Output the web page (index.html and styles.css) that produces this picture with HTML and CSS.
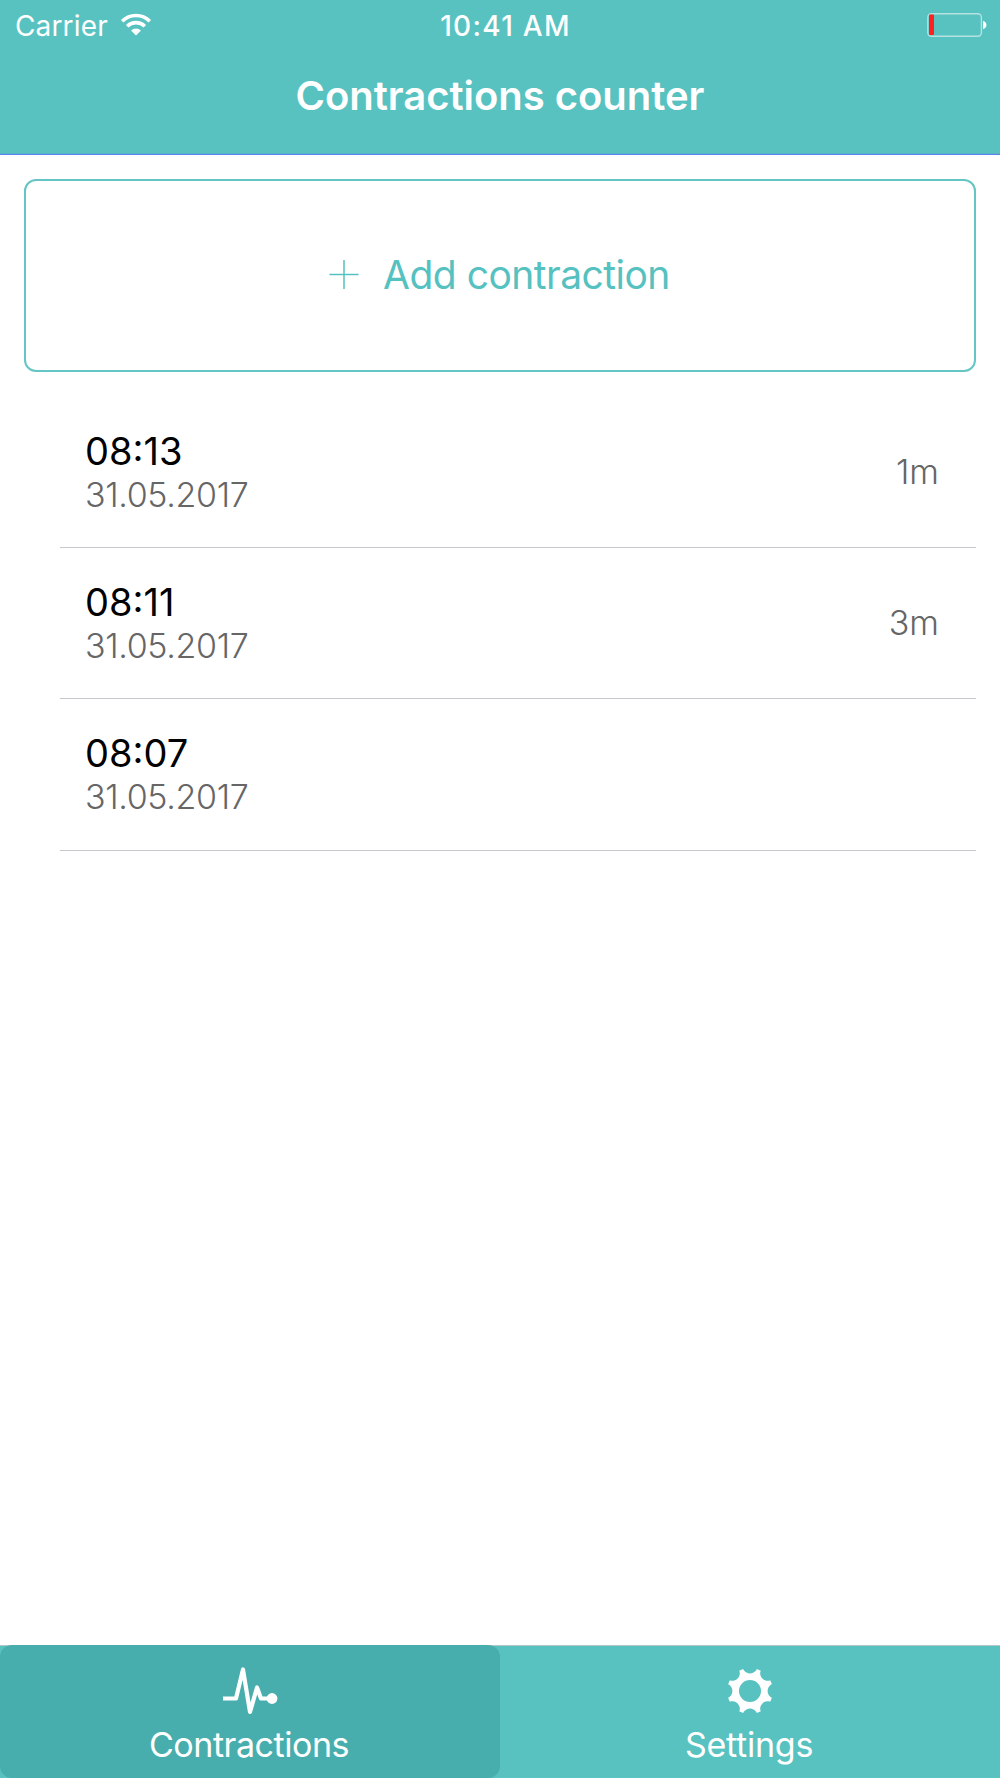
FILE: index.html
```html
<!DOCTYPE html>
<html lang="en">
<head>
<meta charset="utf-8">
<title>Contractions counter</title>
<link rel="stylesheet" href="styles.css">
</head>
<body>
<div class="app">
  <header class="header">
    <div class="status">
      <div class="status-left">
        <span class="carrier">Carrier</span>
        <svg class="wifi" viewBox="0 0 32 24" width="32" height="24">
          <path d="M2.2 8.2A19.5 19.5 0 0 1 29.8 8.2M7.2 13.2A12.6 12.6 0 0 1 24.8 13.2" fill="none" stroke="#fff" stroke-width="3.6"/>
          <path d="M16 22.5L11 17.4A7.2 7.2 0 0 1 21 17.4Z" fill="#fff"/>
        </svg>
      </div>
      <span class="clock">10:41 AM</span>
      <div class="status-right">
        <svg class="battery" viewBox="0 0 60 24" width="60" height="24">
          <rect x="0.8" y="0.8" width="53.6" height="22.4" rx="3.6" fill="none" stroke="#b4e2e1" stroke-width="1.4"/>
          <rect x="2" y="1.6" width="5" height="20.4" rx="1" fill="#ff2020"/>
          <path d="M56 8C60.600 8.600 60.600 15.400 56 16Z" fill="#fff"/>
        </svg>
      </div>
    </div>
    <h1 class="title">Contractions counter</h1>
  </header>
  <main class="content">
    <button class="add">
      <svg class="plus" viewBox="0 0 30 30" width="30" height="30"><path d="M0.500 14.500H29.500M15 0V29" stroke="#55c1c0" stroke-width="1.500"/></svg>
      <span class="add-label">Add contraction</span>
    </button>
    <ul class="list">
      <li class="row">
        <div class="when"><span class="time">08:13</span><span class="date">31.05.2017</span></div>
        <span class="gap">1m</span>
      </li>
      <li class="row">
        <div class="when"><span class="time">08:11</span><span class="date">31.05.2017</span></div>
        <span class="gap">3m</span>
      </li>
      <li class="row">
        <div class="when"><span class="time">08:07</span><span class="date">31.05.2017</span></div>
      </li>
    </ul>
  </main>
  <nav class="tabs">
    <a class="tab active">
      <svg class="tab-icon" viewBox="0 0 56 50" width="56" height="50">
        <path d="M1 32.500H14L21 3.500L28 46L35 21.500L39 32.500H48" fill="none" stroke="#fff" stroke-width="4.200" stroke-linejoin="round"/>
        <circle cx="50" cy="32.500" r="5.400" fill="#fff"/>
      </svg>
      <span class="tab-label contractions">Contractions</span>
    </a>
    <a class="tab">
      <svg class="tab-icon" viewBox="-28 -25 56 50" width="56" height="50">
        <path fill="#fff" fill-rule="evenodd" d="M-6.200-20.800A7.600 7.600 0 0 0 6.200-20.800L6.800-21.900L10.800-20.200L10.300-19.100A7.600 7.600 0 0 0 19.100-10.300L20.200-10.800L21.900-6.800L20.800-6.200A7.600 7.600 0 0 0 20.800 6.200L21.900 6.800L20.200 10.800L19.100 10.300A7.600 7.600 0 0 0 10.300 19.100L10.800 20.200L6.800 21.900L6.200 20.800A7.600 7.600 0 0 0-6.200 20.800L-6.800 21.900L-10.800 20.200L-10.300 19.100A7.600 7.600 0 0 0-19.100 10.300L-20.200 10.800L-21.900 6.800L-20.800 6.200A7.600 7.600 0 0 0-20.800-6.200L-21.900-6.800L-20.200-10.800L-19.100-10.300A7.600 7.600 0 0 0-10.300-19.100L-10.800-20.200L-6.800-21.900ZM11 0A11 11 0 1 0-11 0A11 11 0 1 0 11 0Z"/>
      </svg>
      <span class="tab-label settings">Settings</span>
    </a>
  </nav>
</div>
</body>
</html>
```
FILE: styles.css
```css
* { box-sizing: border-box; }
body { margin: 0; background: #fff; font-family: Inter, "Liberation Sans", sans-serif; }
.app { display: flex; flex-direction: column; height: 1778px; }
.header { height: 155px; background: #58c2c1; border-bottom: 1px solid #5a88ee; box-shadow: inset 0 -1px #58b0c8; color: #fff; }
.status { display: grid; grid-template-columns: 1fr auto 1fr; height: 50px; padding: 0 13px 0 15px; align-items: center; }
.status-left { display: flex; align-items: center; gap: 12px; }
.carrier { padding-top: 2px; font-size: 28px; line-height: 48px; letter-spacing: 0.15px; }
.wifi { display: block; margin-bottom: 1px; }
.clock { padding: 2px 0 0 9px; font-size: 28px; font-weight: 500; line-height: 48px; letter-spacing: 1.3px; }
.status-right { display: flex; justify-content: flex-end; }
.battery { display: block; }
.title { margin: 21px 0 0; font-size: 40px; font-weight: 600; line-height: 50px; letter-spacing: -0.04px; text-align: center; }
.content { flex: 1; padding: 24px 24px 0; }
.add { display: flex; align-items: center; justify-content: center; gap: 24px; width: 100%; height: 193px; padding: 0 1px 1px 0; border: 2px solid #65c5c4; border-radius: 12px; background: #fff; color: #55c1c0; font-family: inherit; }
.plus { display: block; }
.add-label { font-size: 39px; line-height: 50px; letter-spacing: -0.52px; }
.list { list-style: none; margin: 25px 0 0 36px; padding: 0; }
.row { display: flex; justify-content: space-between; align-items: center; height: 151.300px; padding: 0 37px 0 25px; border-bottom: 1px solid #c8c7cc; }
.row:first-child { height: 151px; }
.when { display: flex; flex-direction: column; padding-top: 2px; }
.time { font-size: 38px; line-height: 44px; color: #000; }
.date { font-size: 34px; font-weight: 300; line-height: 44px; letter-spacing: -0.35px; color: #666; }
.gap { font-size: 34px; font-weight: 300; line-height: 44px; color: #666; }
.tabs { display: flex; height: 133px; border-top: 1px solid #b2c8c6; background: #58c2c1; color: #fff; }
.tab { display: flex; flex: 1; flex-direction: column; align-items: center; padding-top: 20px; }
.active { margin-top: -1px; padding-top: 21px; border-radius: 12px; background: #48aead; }
.tab-icon { display: block; }
.tab-label { margin-top: 7px; padding-right: 2px; font-size: 34px; line-height: 44px; }
.contractions { letter-spacing: -0.45px; }
.settings { letter-spacing: -0.25px; }
```
